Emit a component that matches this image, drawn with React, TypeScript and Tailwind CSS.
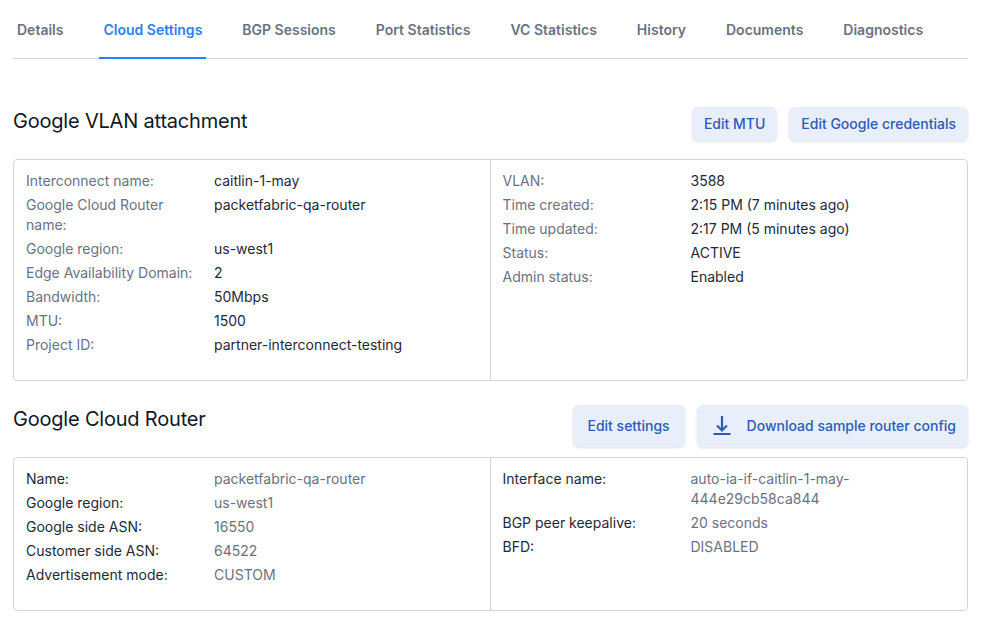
import React from 'react';

const TABS = ['Details', 'Cloud Settings', 'BGP Sessions', 'Port Statistics', 'VC Statistics', 'History', 'Documents', 'Diagnostics'];

const Button = ({ children, className = '' }: { children: React.ReactNode; className?: string }) => (
  <button className={`flex items-center justify-center gap-3 rounded-md bg-[#e8effb] px-3 py-2 text-sm font-medium leading-[18px] text-[#2c5cb8] shadow-sm ${className}`}>
    {children}
  </button>
);

const DownloadIcon = () => (
  <svg width="24" height="26" viewBox="0 0 24 26" fill="none" stroke="#2c5cb8" className="ml-0.5">
    <path d="M11 3v14" strokeWidth="2.2" />
    <path d="M6 12.5l5 5 5-5" strokeWidth="2.2" />
    <path d="M2.5 21h17" strokeWidth="2" />
  </svg>
);

const Rows = ({ rows, labelClass, valueClass }: { rows: string[][]; labelClass: string; valueClass: string }) => (
  <dl className="grid grid-cols-[188px_1fr] content-start px-3 pt-[9px] pb-[23px] text-sm leading-5">
    {rows.map(([label, value]) => (
      <React.Fragment key={label}>
        <dt className={`py-0.5 pr-4 ${labelClass}`}>{label}</dt>
        <dd className={`py-0.5 ${valueClass}`}>{value}</dd>
      </React.Fragment>
    ))}
  </dl>
);

const Section = ({ title, buttons, left, right, labelClass, valueClass }: any) => (
  <section className="mb-6">
    <div className="flex h-13 items-start justify-between">
      <h2 className="text-xl leading-7 tracking-[-0.01em] text-gray-900">{title}</h2>
      <div className="flex items-start gap-3">{buttons}</div>
    </div>
    <div className="grid grid-cols-2 divide-x divide-gray-300 rounded border border-gray-300">
      <Rows rows={left} labelClass={labelClass} valueClass={valueClass} />
      <Rows rows={right} labelClass={labelClass} valueClass={valueClass} />
    </div>
  </section>
);

export default function App() {
  return (
    <div className="min-h-screen w-[968px] bg-white pl-[13px]" style={{ fontFamily: 'Inter, "Noto Sans", sans-serif' }}>
      <nav className="mb-12 flex h-[59px] gap-8 border-b border-gray-300">
        {TABS.map(tab => (
          <div
            key={tab}
            className={`flex h-[59px] items-center px-1 text-sm font-semibold ${tab === 'Cloud Settings' ? 'border-b-2 border-blue-500 pt-0.5 text-blue-500' : 'text-gray-500'}`}
          >
            {tab}
          </div>
        ))}
      </nav>

      <Section
        title="Google VLAN attachment"
        labelClass="text-gray-500"
        valueClass="text-gray-800"
        buttons={<><Button>Edit MTU</Button><Button>Edit Google credentials</Button></>}
        left={[
          ['Interconnect name:', 'caitlin-1-may'],
          ['Google Cloud Router name:', 'packetfabric-qa-router'],
          ['Google region:', 'us-west1'],
          ['Edge Availability Domain:', '2'],
          ['Bandwidth:', '50Mbps'],
          ['MTU:', '1500'],
          ['Project ID:', 'partner-interconnect-testing'],
        ]}
        right={[
          ['VLAN:', '3588'],
          ['Time created:', '2:15 PM (7 minutes ago)'],
          ['Time updated:', '2:17 PM (5 minutes ago)'],
          ['Status:', 'ACTIVE'],
          ['Admin status:', 'Enabled'],
        ]}
      />

      <Section
        title="Google Cloud Router"
        labelClass="text-gray-800"
        valueClass="text-gray-500"
        buttons={<><Button className="w-28"><span className="py-1">Edit settings</span></Button><Button><DownloadIcon />Download sample router config</Button></>}
        left={[
          ['Name:', 'packetfabric-qa-router'],
          ['Google region:', 'us-west1'],
          ['Google side ASN:', '16550'],
          ['Customer side ASN:', '64522'],
          ['Advertisement mode:', 'CUSTOM'],
        ]}
        right={[
          ['Interface name:', 'auto-ia-if-caitlin-1-may-444e29cb58ca844'],
          ['BGP peer keepalive:', '20 seconds'],
          ['BFD:', 'DISABLED'],
        ]}
      />
    </div>
  );
}
